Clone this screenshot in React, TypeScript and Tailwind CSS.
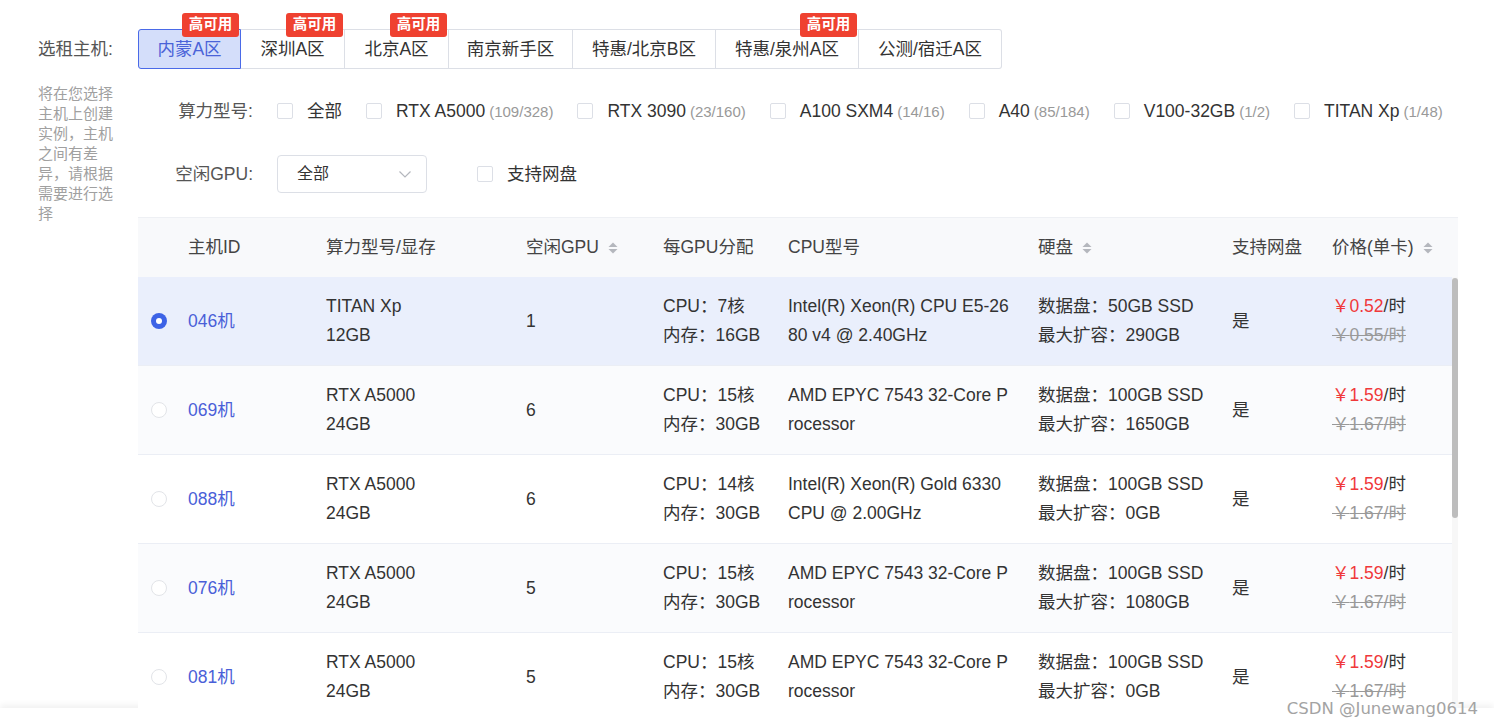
import React from 'react';

const FONT = { fontFamily: '"Liberation Sans", Arial, "Noto Sans CJK SC", sans-serif' };

const zones = [
  { name: '内蒙A区', w: 'w-[103px]', hot: true, active: true },
  { name: '深圳A区', w: 'w-[104px]', hot: true },
  { name: '北京A区', w: 'w-[104px]', hot: true },
  { name: '南京新手区', w: 'w-[124px]' },
  { name: '特惠/北京B区', w: 'w-[143px]' },
  { name: '特惠/泉州A区', w: 'w-[143px]', hot: true },
  { name: '公测/宿迁A区', w: 'w-[143px]' },
];

const gpuTypes = [
  { name: '全部' },
  { name: 'RTX A5000', count: '(109/328)' },
  { name: 'RTX 3090', count: '(23/160)' },
  { name: 'A100 SXM4', count: '(14/16)' },
  { name: 'A40', count: '(85/184)' },
  { name: 'V100-32GB', count: '(1/2)' },
  { name: 'TITAN Xp', count: '(1/48)' },
];

interface Host {
  id: string;
  gpu: string;
  mem: string;
  free: number;
  cpu: string;
  ram: string;
  cpuModel: [string, string];
  disk: string;
  maxDisk: string;
  price: string;
  oldPrice: string;
}

const amd: [string, string] = ['AMD EPYC 7543 32-Core P', 'rocessor'];

const hosts: Host[] = [
  { id: '046机', gpu: 'TITAN Xp', mem: '12GB', free: 1, cpu: '7核', ram: '16GB', cpuModel: ['Intel(R) Xeon(R) CPU E5-26', '80 v4 @ 2.40GHz'], disk: '50GB SSD', maxDisk: '290GB', price: '0.52', oldPrice: '0.55' },
  { id: '069机', gpu: 'RTX A5000', mem: '24GB', free: 6, cpu: '15核', ram: '30GB', cpuModel: amd, disk: '100GB SSD', maxDisk: '1650GB', price: '1.59', oldPrice: '1.67' },
  { id: '088机', gpu: 'RTX A5000', mem: '24GB', free: 6, cpu: '14核', ram: '30GB', cpuModel: ['Intel(R) Xeon(R) Gold 6330', 'CPU @ 2.00GHz'], disk: '100GB SSD', maxDisk: '0GB', price: '1.59', oldPrice: '1.67' },
  { id: '076机', gpu: 'RTX A5000', mem: '24GB', free: 5, cpu: '15核', ram: '30GB', cpuModel: amd, disk: '100GB SSD', maxDisk: '1080GB', price: '1.59', oldPrice: '1.67' },
  { id: '081机', gpu: 'RTX A5000', mem: '24GB', free: 5, cpu: '15核', ram: '30GB', cpuModel: amd, disk: '100GB SSD', maxDisk: '0GB', price: '1.59', oldPrice: '1.67' },
];

const grid = 'grid grid-cols-[40px_138px_200px_137px_125px_250px_194px_100px_130px]';

function Checkbox() {
  return <span className="inline-block h-[16px] w-[16px] shrink-0 rounded-[2px] border border-[#dcdfe6] bg-white" />;
}

function SortIcon() {
  return (
    <svg width="12" height="16" viewBox="0 0 12 16" className="ml-[8px] shrink-0">
      <path d="M6 2.5 L10.5 7 H1.5 Z" fill="#b4b7bd" />
      <path d="M6 13.5 L10.5 9 H1.5 Z" fill="#b4b7bd" />
    </svg>
  );
}

function Radio({ checked }: { checked: boolean }) {
  if (checked) {
    return (
      <span className="flex h-[16px] w-[16px] items-center justify-center rounded-full bg-[#3d63e6]">
        <span className="h-[6px] w-[6px] rounded-full bg-white" />
      </span>
    );
  }
  return <span className="h-[16px] w-[16px] rounded-full border border-[#e2e4e8] bg-white" />;
}

export default function App() {
  return (
    <div className="relative h-[727px] w-[1494px] overflow-hidden bg-white text-[#333]" style={FONT}>
      <div className="flex h-[708px] overflow-hidden">
        {/* left side */}
        <aside className="w-[138px] shrink-0 pl-[38px] pt-[29px]">
          <div className="flex h-[40px] items-center text-[17.5px] text-[#555]">选租主机:</div>
          <p className="mt-[15px] w-[78px] text-[15px] leading-[20px] text-[#a0a0a0]">
            将在您选择主机上创建实例，主机之间有差异，请根据需要进行选择
          </p>
        </aside>

        <main className="w-[1320px] shrink-0 pt-[29px]">
          {/* zone tabs */}
          <div className="flex">
            {zones.map((z, i) => (
              <div
                key={z.name}
                className={`relative flex h-[40px] ${z.w} items-center justify-center text-[17.5px] ${
                  z.active
                    ? 'rounded-l-[3px] border border-[#4a6ae8] bg-[#d4defa] text-[#4a63d8]'
                    : `border-y border-r border-[#dcdfe6] ${i === zones.length - 1 ? 'rounded-r-[3px]' : ''}`
                }`}
              >
                {z.name}
                {z.hot && (
                  <span className="absolute right-[1px] top-[-17px] flex h-[24px] w-[57px] items-center justify-center rounded-[3px] bg-[#ef4130] text-[14.5px] font-bold text-white">
                    高可用
                  </span>
                )}
              </div>
            ))}
          </div>

          {/* gpu type filter */}
          <div className="mt-[22px] flex h-[40px] items-center">
            <div className="w-[115px] text-right text-[17.5px] text-[#555]">算力型号:</div>
            <div className="ml-[24px] flex items-center gap-[24px]">
              {gpuTypes.map((g) => (
                <label key={g.name} className="flex items-center gap-[14px] whitespace-nowrap">
                  <Checkbox />
                  <span className="text-[17.5px]">
                    {g.name}
                    {g.count && <span className="ml-[4px] text-[15px] text-[#999]">{g.count}</span>}
                  </span>
                </label>
              ))}
            </div>
          </div>

          {/* free gpu filter */}
          <div className="mt-[24px] flex h-[38px] items-center">
            <div className="w-[115px] text-right text-[17.5px] text-[#555]">空闲GPU:</div>
            <div className="ml-[24px] flex h-[38px] w-[150px] items-center justify-between rounded-[4px] border border-[#dcdfe6] pl-[19px] pr-[14px]">
              <span className="text-[16px]">全部</span>
              <svg width="14" height="14" viewBox="0 0 14 14" fill="none">
                <path d="M1.5 4.5 L7 10 L12.5 4.5" stroke="#b4b7bd" strokeWidth="1.2" />
              </svg>
            </div>
            <label className="ml-[50px] flex items-center gap-[14px]">
              <Checkbox />
              <span className="text-[17.5px]">支持网盘</span>
            </label>
          </div>

          {/* table */}
          <div className="mt-[24px] w-[1320px]">
            <div className={`${grid} h-[60px] border-t border-[#eef0f4] bg-[#f8f9fb] pr-[6px] text-[17.5px] text-[#444]`}>
              <div />
              <div className="flex items-center pl-[10px]">主机ID</div>
              <div className="flex items-center pl-[10px]">算力型号/显存</div>
              <div className="flex items-center pl-[10px]">空闲GPU<SortIcon /></div>
              <div className="flex items-center pl-[10px]">每GPU分配</div>
              <div className="flex items-center pl-[10px]">CPU型号</div>
              <div className="flex items-center pl-[10px]">硬盘<SortIcon /></div>
              <div className="flex items-center pl-[10px]">支持网盘</div>
              <div className="flex items-center pl-[10px]">价格(单卡)<SortIcon /></div>
            </div>

            <div className="flex">
              <div className="w-[1314px]">
                {hosts.map((h, i) => (
                  <div
                    key={h.id}
                    className={`${grid} h-[89px] border-b border-[#ebeef5] text-[17.5px] leading-[29px] ${
                      i === 0 ? 'bg-[#eaeffc]' : i % 2 === 1 ? 'bg-[#fafbfd]' : 'bg-white'
                    }`}
                  >
                    <div className="flex items-center pl-[13px]">
                      <Radio checked={i === 0} />
                    </div>
                    <div className="flex items-center pl-[10px] text-[#4a5fd8]">{h.id}</div>
                    <div className="flex flex-col justify-center pl-[10px]">
                      <span>{h.gpu}</span>
                      <span>{h.mem}</span>
                    </div>
                    <div className="flex items-center pl-[10px]">{h.free}</div>
                    <div className="flex flex-col justify-center pl-[10px]">
                      <span>CPU：{h.cpu}</span>
                      <span>内存：{h.ram}</span>
                    </div>
                    <div className="flex flex-col justify-center pl-[10px]">
                      <span>{h.cpuModel[0]}</span>
                      <span>{h.cpuModel[1]}</span>
                    </div>
                    <div className="flex flex-col justify-center pl-[10px]">
                      <span>数据盘：{h.disk}</span>
                      <span>最大扩容：{h.maxDisk}</span>
                    </div>
                    <div className="flex items-center pl-[10px]">是</div>
                    <div className="flex flex-col justify-center pl-[10px]">
                      <span>
                        <span className="text-[#f0383a]">￥{h.price}</span>/时
                      </span>
                      <span className="text-[#999] line-through">￥{h.oldPrice}/时</span>
                    </div>
                  </div>
                ))}
              </div>
              {/* scrollbar */}
              <div className="w-[6px] bg-[#f7f7f7] pt-[1px]">
                <div className="h-[240px] w-[6px] rounded-[3px] bg-[#bdbdbd]" />
              </div>
            </div>
          </div>
        </main>
      </div>

      <footer className="h-[19px] bg-white shadow-[0_-3px_6px_rgba(0,0,0,0.06)]" />

      <span className="absolute bottom-[5px] right-[16px] text-[16.5px] text-[#9a9a9a] opacity-90" style={{ fontFamily: '"DejaVu Sans", sans-serif' }}>
        CSDN @Junewang0614
      </span>
    </div>
  );
}
